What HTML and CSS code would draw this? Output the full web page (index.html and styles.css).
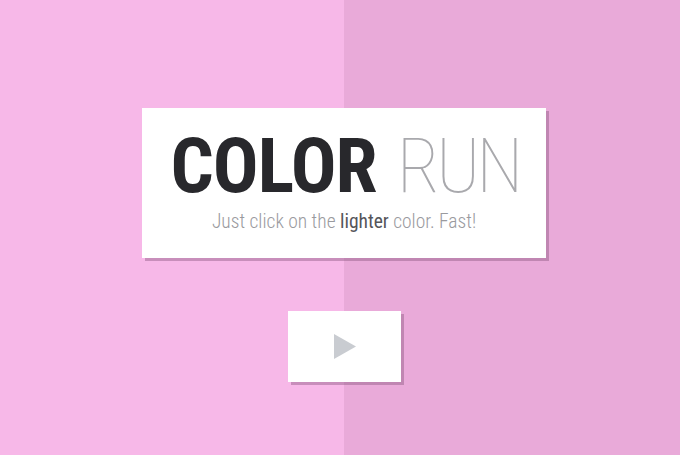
FILE: index.html
```html
<!DOCTYPE html>
<html>
<head>
<meta charset="utf-8">
<link rel="stylesheet" href="styles.css">
</head>
<body>
<div class="stage">
  <div class="title-card">
    <h1 class="title"><span class="bold">COLOR</span><span class="thin">RUN</span></h1>
    <p class="subtitle">Just click on the <span class="hl">lighter</span> color. Fast!</p>
  </div>
  <button class="play" aria-label="Play">
    <svg width="24" height="27" viewBox="0 0 24 27"><path d="M1 1 L23 13.5 L1 26 Z" fill="#c9ccd1"/></svg>
  </button>
</div>
</body>
</html>
```
FILE: styles.css
```css
html, body {
  margin: 0;
  padding: 0;
  height: 100%;
}
body {
  background: linear-gradient(to right, #f7b8e8 0, #f7b8e8 344px, #e9aad9 344px, #e9aad9 100%);
  font-family: "Roboto", sans-serif;
}
.stage {
  display: flex;
  flex-direction: column;
  align-items: center;
  padding-top: 108px;
  padding-left: 8px;
}
.title-card {
  width: 404px;
  height: 150px;
  background: #fff;
  box-shadow: 3px 3px 0 rgba(130, 80, 120, 0.4);
  display: flex;
  flex-direction: column;
  align-items: center;
  box-sizing: border-box;
  padding-top: 20px;
}
.title {
  margin: 0;
  font-family: "Roboto", sans-serif;
  font-stretch: 75%;
  font-size: 76px;
  line-height: 1;
  white-space: nowrap;
  font-weight: normal;
  display: flex;
  gap: 20px;
  padding-left: 2px;
}
.bold {
  font-weight: 700;
  color: #28282c;
  letter-spacing: -1px;
}
.thin {
  font-weight: 100;
  color: #a9a9ad;
  letter-spacing: -4px;
}
.subtitle {
  margin: 8px 0 0;
  font-family: "Roboto", sans-serif;
  font-stretch: 78%;
  font-weight: 300;
  font-size: 19.5px;
  line-height: 1;
  color: #9a9a9e;
}
.hl {
  color: #55555a;
  font-weight: 400;
}
.play {
  margin-top: 53px;
  width: 113px;
  height: 71px;
  border: 0;
  padding: 0 0 0 2px;
  background: #fff;
  box-shadow: 3px 3px 0 rgba(130, 80, 120, 0.4);
  display: flex;
  align-items: center;
  justify-content: center;
}
```
